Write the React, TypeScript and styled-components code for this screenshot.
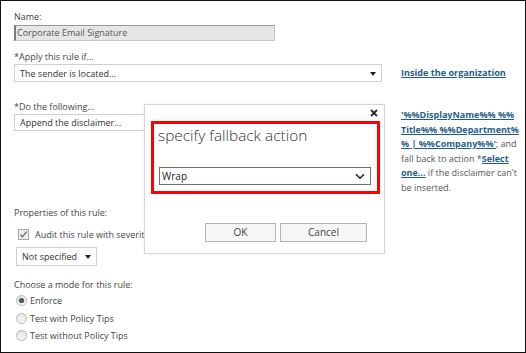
import React from 'react';
import styled, { createGlobalStyle } from 'styled-components';

const Global = createGlobalStyle`
  html, body { margin: 0; padding: 0; background: #fff; }
  body { font-family: "Open Sans", "Noto Sans", sans-serif; }
`;

const Frame = styled.div`
  position: relative;
  width: 526px;
  height: 353px;
  box-sizing: border-box;
  border: 1px solid #111;
  background: #fff;
  overflow: hidden;
  padding: 9px 0 0 13px;
  font-size: 9px;
  color: #454545;
`;

const Label = styled.div<{ $mt?: number }>`
  height: 14px;
  line-height: 14px;
  margin-top: ${(p) => p.$mt ?? 0}px;
  white-space: nowrap;
`;

const NameBox = styled.div`
  box-sizing: border-box;
  width: 261px;
  height: 16px;
  margin-top: 1px;
  background: #e6e6e6;
  border: 1px solid #c4c4c4;
  border-top-color: #9a9a9a;
  border-left: 2px solid #7a7a7a;
  padding-left: 1px;
  line-height: 14px;
  color: #555;
`;

const FieldRow = styled.div<{ $mt?: number; $align?: string }>`
  display: grid;
  grid-template-columns: 368px 115px;
  column-gap: 19px;
  align-items: ${(p) => p.$align ?? 'center'};
  margin-top: ${(p) => p.$mt ?? 0}px;
`;

const Select = styled.div<{ $w?: number; $h?: number; $pl?: number }>`
  box-sizing: border-box;
  display: flex;
  align-items: center;
  justify-content: space-between;
  width: ${(p) => (p.$w ? `${p.$w}px` : '100%')};
  height: ${(p) => p.$h ?? 18}px;
  border: 1px solid #cfcfcf;
  background: #fff;
  padding: 0 5px 0 ${(p) => p.$pl ?? 5}px;
  color: #333;
  white-space: nowrap;
`;

const Triangle = styled.span`
  width: 0;
  height: 0;
  border-left: 3.5px solid transparent;
  border-right: 3.5px solid transparent;
  border-top: 4px solid #222;
  margin-top: 1px;
`;

const Link = styled.span<{ $size?: number }>`
  color: #1f5d8c;
  font-weight: 700;
  font-size: ${(p) => p.$size ?? 9}px;
  text-decoration: underline;
  text-underline-offset: 1px;
  white-space: nowrap;
`;

const LinkCell = styled.div`
  white-space: nowrap;
  line-height: 14px;
`;

const Note = styled.div`
  padding-top: 8px;
  line-height: 14.5px;
  color: #555;
  white-space: nowrap;
`;

const Left = styled.div`
  display: flex;
  flex-direction: column;
`;

const CheckRow = styled.div`
  display: flex;
  align-items: center;
  gap: 6px;
  height: 14px;
  margin-top: 7px;
  padding-left: 4px;
  white-space: nowrap;
`;

const SmallSelect = styled(Select)`
  margin-top: 6px;
  margin-left: 2px;
`;

const RadioRow = styled.div`
  display: flex;
  align-items: center;
  gap: 3px;
  height: 17.5px;
  padding-left: 2px;
  white-space: nowrap;
`;

const Dialog = styled.div`
  position: absolute;
  left: 143px;
  top: 103px;
  width: 241px;
  height: 150px;
  box-sizing: border-box;
  background: #fff;
  border: 1px solid #d6d6d6;
  box-shadow: 0 0 2px rgba(0, 0, 0, 0.08);
  padding: 0 5px 0 6px;
  display: flex;
  flex-direction: column;
`;

const DialogHead = styled.div`
  height: 16px;
  display: flex;
  align-items: center;
  justify-content: flex-end;
  padding-right: 1px;
`;

const RedBox = styled.div`
  box-sizing: border-box;
  width: 229px;
  height: 73px;
  border: 3px solid #ff0000;
  padding: 1px 0 0 4px;
`;

const Heading = styled.div`
  font-size: 15.4px;
  font-weight: 300;
  line-height: 22px;
  color: #333;
  white-space: nowrap;
`;

const WrapSelect = styled.div`
  box-sizing: border-box;
  margin-top: 20px;
  margin-left: 1px;
  width: 212px;
  height: 18px;
  border: 1px solid #707070;
  display: flex;
  align-items: center;
  justify-content: space-between;
  padding: 0 5px 0 2px;
  color: #222;
  font-size: 10px;
`;

const Buttons = styled.div`
  display: flex;
  justify-content: flex-end;
  gap: 4px;
  margin-top: 29px;
  padding-right: 12px;
`;

const Button = styled.button<{ $w: number }>`
  box-sizing: border-box;
  width: ${(p) => p.$w}px;
  height: 19px;
  border: 1px solid #b4b4b4;
  background: #f6f6f6;
  color: #444;
  font-family: inherit;
  font-size: 10px;
  padding: 0;
  line-height: 17px;
`;

const CheckIcon = () => (
  <svg width="11" height="11" viewBox="0 0 11 11">
    <rect x="0.5" y="0.5" width="10" height="10" fill="#f2f2f2" stroke="#a8a8a8" />
    <path d="M2.3 5.6 L4.4 7.8 L8.8 2.6" fill="none" stroke="#7a7a7a" strokeWidth="1.5" />
  </svg>
);

const RadioIcon = ({ on }: { on?: boolean }) => (
  <svg width="11" height="11" viewBox="0 0 11 11">
    <defs>
      <linearGradient id="rg" x1="0" y1="0" x2="0" y2="1">
        <stop offset="0" stopColor="#e4e4e4" />
        <stop offset="1" stopColor="#f8f8f8" />
      </linearGradient>
    </defs>
    <circle cx="5.5" cy="5.5" r="5" fill="url(#rg)" stroke="#b8b8b8" />
    {on && <circle cx="5.5" cy="5.5" r="2.6" fill="#555" />}
  </svg>
);

const CloseIcon = () => (
  <svg width="8" height="8" viewBox="0 0 8 8">
    <path d="M1 1 L7 7 M7 1 L1 7" stroke="#2a2a2a" strokeWidth="1.8" />
  </svg>
);

const Chevron = () => (
  <svg width="10" height="7" viewBox="0 0 10 7">
    <path d="M1 1.2 L5 5.2 L9 1.2" fill="none" stroke="#222" strokeWidth="1.6" />
  </svg>
);

export default function App() {
  return (
    <>
      <Global />
      <Frame>
        <Label>Name:</Label>
        <NameBox>Corporate Email Signature</NameBox>

        <Label $mt={9}>*Apply this rule if...</Label>
        <FieldRow>
          <Select>
            The sender is located...
            <Triangle />
          </Select>
          <LinkCell>
            <Link $size={9.1}>Inside the organization</Link>
          </LinkCell>
        </FieldRow>

        <FieldRow $mt={18} $align="start">
          <Left>
            <Label>*Do the following...</Label>
            <Select $h={17}>
              Append the disclaimer...
              <Triangle />
            </Select>
          </Left>
          <Note>
            <Link>
              '%%DisplayName%% %%
              <br />
              Title%% %%Department%
              <br />% | %%Company%%'
            </Link>
            ; and
            <br />
            fall back to action *<Link>Select</Link>
            <br />
            <Link>one...</Link> if the disclaimer can't
            <br />
            be inserted.
          </Note>
        </FieldRow>

        <Label $mt={11}>Properties of this rule:</Label>
        <CheckRow>
          <CheckIcon />
          Audit this rule with severity level:
        </CheckRow>
        <SmallSelect $w={81} $h={19} $pl={5}>
          Not specified
          <Triangle />
        </SmallSelect>

        <Label $mt={12}>Choose a mode for this rule:</Label>
        <RadioRow>
          <RadioIcon on />
          Enforce
        </RadioRow>
        <RadioRow>
          <RadioIcon />
          Test with Policy Tips
        </RadioRow>
        <RadioRow>
          <RadioIcon />
          Test without Policy Tips
        </RadioRow>

        <Dialog>
          <DialogHead>
            <CloseIcon />
          </DialogHead>
          <RedBox>
            <Heading>specify fallback action</Heading>
            <WrapSelect>
              Wrap
              <Chevron />
            </WrapSelect>
          </RedBox>
          <Buttons>
            <Button $w={71}>OK</Button>
            <Button $w={87}>Cancel</Button>
          </Buttons>
        </Dialog>
      </Frame>
    </>
  );
}
